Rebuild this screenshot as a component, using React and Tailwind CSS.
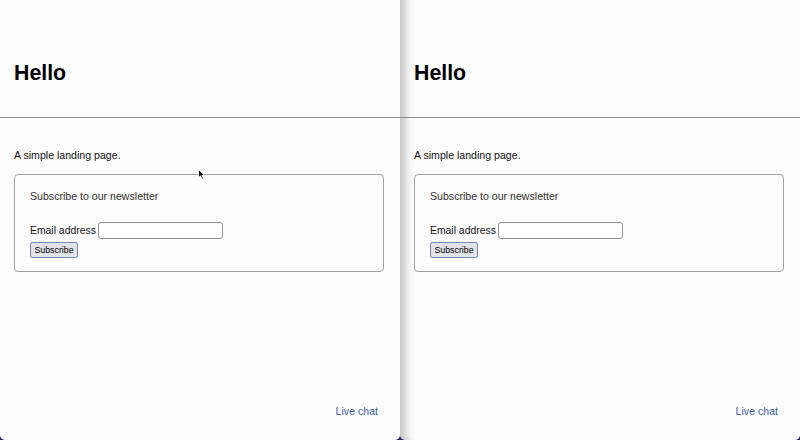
import React from "react";

function Panel({ shadow, cursor }) {
  return (
    <div
      className={
        "relative flex h-[440px] w-[400px] flex-col overflow-hidden rounded-b-[5px] bg-[#fdfdfd] text-[#111] " +
        (shadow ? "shadow-[inset_14px_0_9px_-8px_rgba(0,0,0,0.22)]" : "")
      }
      style={{ fontFamily: '"Liberation Sans", Arial, sans-serif' }}
    >
      <div className="h-[117px] shrink-0 px-[14px]">
        <h1 className="mt-[60px] text-[21.3px] font-bold leading-[26px] text-black">Hello</h1>
      </div>
      <div className="h-px shrink-0 bg-[#8c8c8c]" />
      <div className="flex flex-1 flex-col pl-[14px] pr-[16px]">
        <p className="mt-[29px] text-[10.6px] leading-[16px]">A simple landing page.</p>
        <div className="mt-[11px] flex h-[98px] flex-col rounded-[4px] border border-[#a3a3a3] px-[15px] pt-[13px]">
          <p className="text-[10.6px] leading-[16px] text-[#333]">Subscribe to our newsletter</p>
          <div className="mt-[18px] flex items-center gap-[2px]">
            <span className="text-[10.4px] leading-[16px]">Email address</span>
            <div className="h-[17px] w-[125px] rounded-[3px] border border-[#8f8f9d] bg-white" />
          </div>
          <div className="mt-[3px] flex">
            <div className="flex h-[16px] w-[48px] items-center justify-center rounded-[2px] border border-[#7487b3] bg-[#e2e2e8] text-[8.8px] leading-none text-black">
              Subscribe
            </div>
          </div>
        </div>
        <div className="flex-1" />
        <div className="mb-[21px] flex justify-end pr-[6px]">
          <span className="text-[10.6px] leading-[16px] text-[#3b5ea3]">Live chat</span>
        </div>
      </div>
      {cursor && (
        <svg className="absolute left-[198px] top-[169px]" width="8" height="11" viewBox="0 0 8 11">
          <path d="M0.5 0.5 L0.5 8.5 L2.5 6.8 L4 10 L5.3 9.4 L3.9 6.3 L6.6 6.3 Z" fill="#000" stroke="#fff" strokeWidth="0.8" />
        </svg>
      )}
    </div>
  );
}

export default function App() {
  return (
    <div className="flex h-[440px] w-[800px] bg-[#2b1d6b]">
      <Panel cursor />
      <Panel shadow />
    </div>
  );
}
